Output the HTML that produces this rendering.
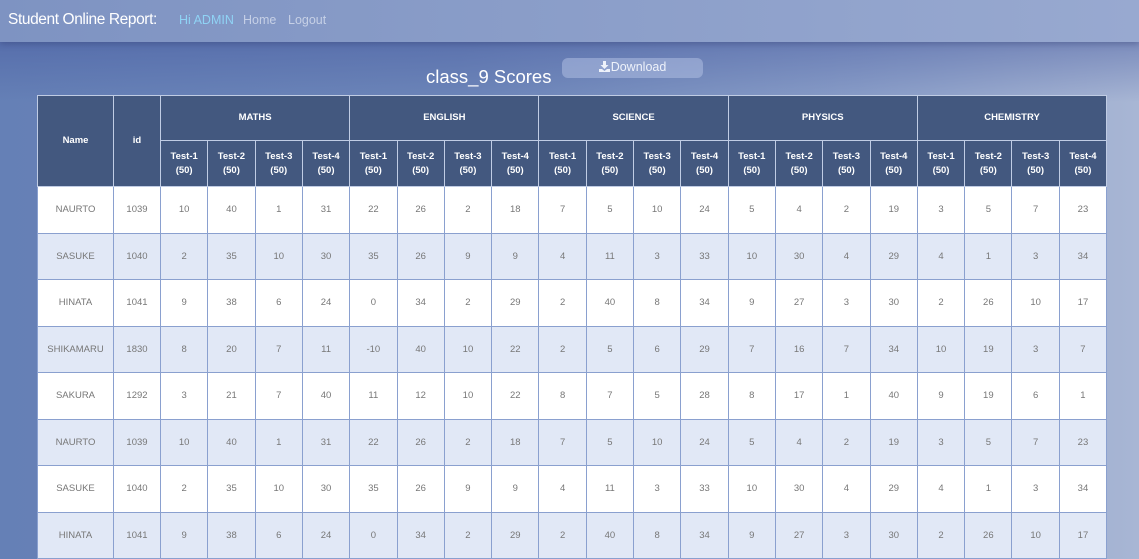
<!DOCTYPE html>
<html><head><meta charset="utf-8"><style>
*{margin:0;padding:0;box-sizing:border-box}
body{width:1139px;height:556px;overflow:hidden;font-family:"Liberation Sans",sans-serif;
background:linear-gradient(90deg,#6580b6 0%,#6d86b9 40%,#8a9ec8 75%,#a8b6d4 100%);position:relative}
.shade{position:absolute;left:0;top:42px;width:1139px;height:60px;background:linear-gradient(180deg,rgba(70,90,160,.45),rgba(70,90,160,0))}
.nav{position:absolute;left:0;top:0;width:1139px;height:42px;background:linear-gradient(90deg,#7e93c2,#98a9d0);box-shadow:0 2px 6px rgba(40,50,100,.35)}
.nav .brand{position:absolute;left:8px;top:11px;font-size:15.5px;color:#fff;letter-spacing:-0.4px}
.nav a{position:absolute;top:13px;font-size:12.5px;text-decoration:none}
h2{position:absolute;left:426px;top:66px;font-size:18.5px;font-weight:normal;color:#fff}
.btn{position:absolute;left:562px;top:58px;width:141px;height:20px;border-radius:6px;background:rgba(175,190,225,.55);color:#eef2fa;font-size:12.5px;text-align:center;line-height:19px}
.btn svg{vertical-align:-1px;margin-right:1px}
table{position:absolute;left:37px;top:95px;width:1069px;table-layout:fixed;border-collapse:collapse}
td,th{border:1px solid #8aa0cf;text-align:center;font-size:9.5px}
th{background:#43587f;color:#fff;font-weight:bold;border:1.5px solid #c0cce4;line-height:14px}
td{color:#777;height:46.5px}
tr.w td{background:#fff}tr.b td{background:#e1e8f6}
</style></head><body>
<div class="shade"></div>
<div class="nav"><span class="brand">Student Online Report:</span>
<a style="left:179px;color:#8fd3f5">Hi ADMIN</a><a style="left:243px;color:#c6d0e6">Home</a><a style="left:288px;color:#c6d0e6">Logout</a></div>
<h2>class_9 Scores</h2>
<div class="btn"><svg width="11" height="11" viewBox="0 0 11 11"><path d="M4 0h3v4h2.5L5.5 8 1.5 4H4z M0 8h3l2.5 2 2.5-2h3v3H0z" fill="#eef2fa"/></svg>Download</div>
<table>
<colgroup><col style="width:76px"><col style="width:47px"><col span="20" style="width:47.3px"></colgroup>
<tr style="height:45px"><th rowspan="2">Name</th><th rowspan="2">id</th><th colspan="4">MATHS</th><th colspan="4">ENGLISH</th><th colspan="4">SCIENCE</th><th colspan="4">PHYSICS</th><th colspan="4">CHEMISTRY</th></tr>
<tr style="height:46px">
<th>Test-1<br>(50)</th><th>Test-2<br>(50)</th><th>Test-3<br>(50)</th><th>Test-4<br>(50)</th>
<th>Test-1<br>(50)</th><th>Test-2<br>(50)</th><th>Test-3<br>(50)</th><th>Test-4<br>(50)</th>
<th>Test-1<br>(50)</th><th>Test-2<br>(50)</th><th>Test-3<br>(50)</th><th>Test-4<br>(50)</th>
<th>Test-1<br>(50)</th><th>Test-2<br>(50)</th><th>Test-3<br>(50)</th><th>Test-4<br>(50)</th>
<th>Test-1<br>(50)</th><th>Test-2<br>(50)</th><th>Test-3<br>(50)</th><th>Test-4<br>(50)</th></tr>
<tr class="w"><td>NAURTO</td><td>1039</td><td>10</td><td>40</td><td>1</td><td>31</td><td>22</td><td>26</td><td>2</td><td>18</td><td>7</td><td>5</td><td>10</td><td>24</td><td>5</td><td>4</td><td>2</td><td>19</td><td>3</td><td>5</td><td>7</td><td>23</td></tr>
<tr class="b"><td>SASUKE</td><td>1040</td><td>2</td><td>35</td><td>10</td><td>30</td><td>35</td><td>26</td><td>9</td><td>9</td><td>4</td><td>11</td><td>3</td><td>33</td><td>10</td><td>30</td><td>4</td><td>29</td><td>4</td><td>1</td><td>3</td><td>34</td></tr>
<tr class="w"><td>HINATA</td><td>1041</td><td>9</td><td>38</td><td>6</td><td>24</td><td>0</td><td>34</td><td>2</td><td>29</td><td>2</td><td>40</td><td>8</td><td>34</td><td>9</td><td>27</td><td>3</td><td>30</td><td>2</td><td>26</td><td>10</td><td>17</td></tr>
<tr class="b"><td>SHIKAMARU</td><td>1830</td><td>8</td><td>20</td><td>7</td><td>11</td><td>-10</td><td>40</td><td>10</td><td>22</td><td>2</td><td>5</td><td>6</td><td>29</td><td>7</td><td>16</td><td>7</td><td>34</td><td>10</td><td>19</td><td>3</td><td>7</td></tr>
<tr class="w"><td>SAKURA</td><td>1292</td><td>3</td><td>21</td><td>7</td><td>40</td><td>11</td><td>12</td><td>10</td><td>22</td><td>8</td><td>7</td><td>5</td><td>28</td><td>8</td><td>17</td><td>1</td><td>40</td><td>9</td><td>19</td><td>6</td><td>1</td></tr>
<tr class="b"><td>NAURTO</td><td>1039</td><td>10</td><td>40</td><td>1</td><td>31</td><td>22</td><td>26</td><td>2</td><td>18</td><td>7</td><td>5</td><td>10</td><td>24</td><td>5</td><td>4</td><td>2</td><td>19</td><td>3</td><td>5</td><td>7</td><td>23</td></tr>
<tr class="w"><td>SASUKE</td><td>1040</td><td>2</td><td>35</td><td>10</td><td>30</td><td>35</td><td>26</td><td>9</td><td>9</td><td>4</td><td>11</td><td>3</td><td>33</td><td>10</td><td>30</td><td>4</td><td>29</td><td>4</td><td>1</td><td>3</td><td>34</td></tr>
<tr class="b"><td>HINATA</td><td>1041</td><td>9</td><td>38</td><td>6</td><td>24</td><td>0</td><td>34</td><td>2</td><td>29</td><td>2</td><td>40</td><td>8</td><td>34</td><td>9</td><td>27</td><td>3</td><td>30</td><td>2</td><td>26</td><td>10</td><td>17</td></tr>
</table>
</body></html>
